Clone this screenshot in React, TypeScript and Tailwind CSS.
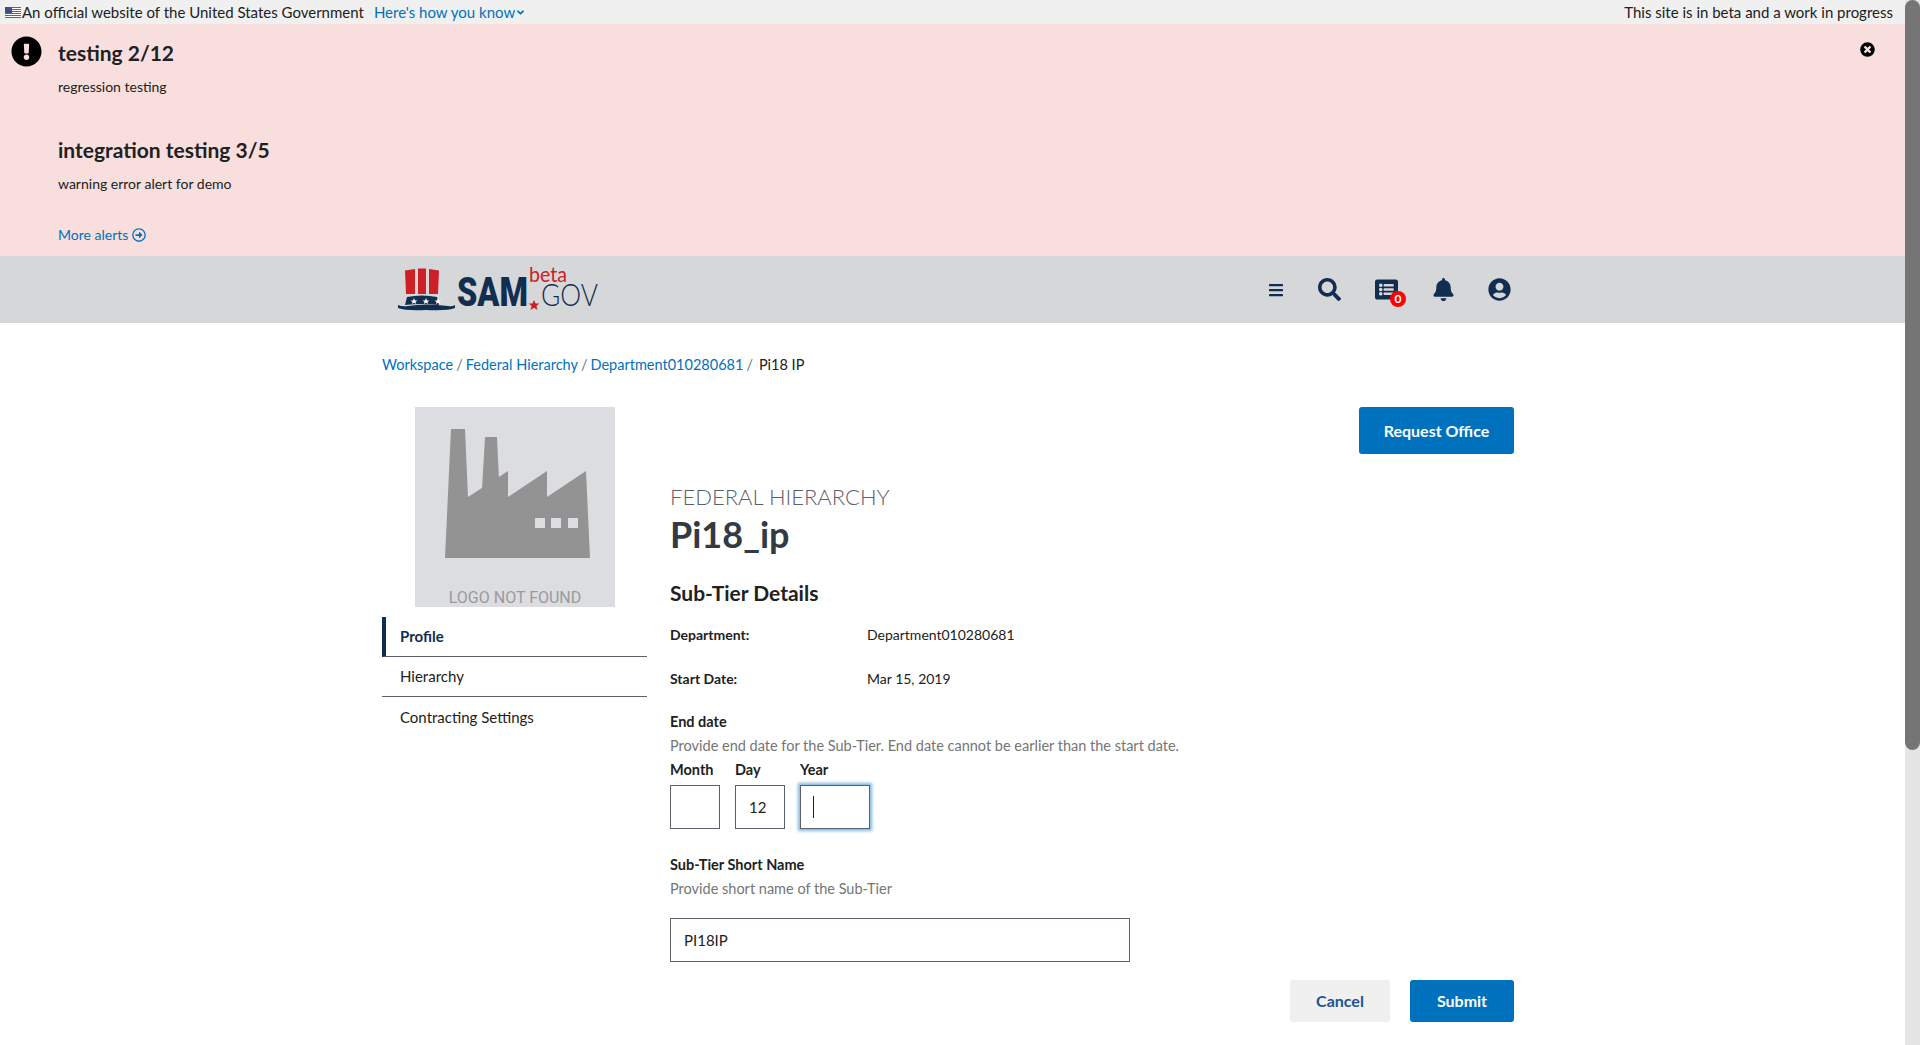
import React from "react";
import { FaBars, FaSearch, FaListAlt, FaBell, FaUserCircle, FaExclamationCircle, FaTimesCircle, FaRegArrowAltCircleRight, FaAngleDown } from "react-icons/fa";

function Flag() {
  return (
    <svg width="16" height="11" viewBox="0 0 16 11" className="shrink-0">
      <rect width="16" height="11" fill="#fff" />
      {[0, 2, 4, 6, 8, 10].map((y) => (
        <rect key={y} y={y} width="16" height="1" fill="#d33" />
      ))}
      <rect width="7" height="6" fill="#3c4f8f" />
    </svg>
  );
}

function SamLogo() {
  return (
    <svg width="204" height="46" viewBox="0 0 204 46" className="block">
      <path d="M7 3.5 L17 2 L17 27 L8 27 Z" fill="#cd2026" />
      <path d="M20 1.5 L28 1.5 L28 27 L20 27 Z" fill="#cd2026" />
      <path d="M31 2 L41 3.5 L40 27 L31 27 Z" fill="#cd2026" />
      <path d="M9 30 Q24 27 39 30 L41 38 Q24 36 7 38 Z" fill="#112e51" />
      <path d="M0 38 Q4 40 10 39 Q28 36 50 39 Q54 40 57 38 L57 41 Q50 44 28 43 Q8 44 0 41 Z" fill="#112e51" />
      <polygon points="16,31 17,33.5 19.4,33.5 17.5,35 18.2,37 16,35.8 13.8,37 14.5,35 12.6,33.5 15,33.5" fill="#fff" />
      <polygon points="28,31 29,33.5 31.4,33.5 29.5,35 30.2,37 28,35.8 25.8,37 26.5,35 24.6,33.5 27,33.5" fill="#fff" />
      <polygon points="40,31 41,33.5 43.4,33.5 41.5,35 42.2,37 40,35.8 37.8,37 38.5,35 36.6,33.5 39,33.5" fill="#fff" />
      <text x="59" y="39" fontFamily="Roboto, sans-serif" fontWeight="900" fontSize="40" fill="#112e51" textLength="71" lengthAdjust="spacingAndGlyphs">SAM</text>
      <text x="131" y="15" fontFamily="Lato, sans-serif" fontWeight="400" fontSize="22" fill="#cd2026" textLength="38" lengthAdjust="spacingAndGlyphs">beta</text>
      <text x="143" y="39" fontFamily="Lato, sans-serif" fontWeight="300" fontSize="32" fill="#112e51" textLength="57" lengthAdjust="spacingAndGlyphs">GOV</text>
      <polygon points="136,33 137.6,36.6 141.4,36.6 138.4,39 139.6,43 136,40.8 132.4,43 133.6,39 130.6,36.6 134.4,36.6" fill="#cd2026" />
    </svg>
  );
}

function Factory() {
  return (
    <svg width="150" height="152" viewBox="0 0 150 152" className="block">
      <path d="M33 0 H47 L50 68 L90 42 V68 L129 42 V68 L168 42 L172 129 H27 Z" transform="translate(-22 0)" fill="#939393" />
      <path d="M53 8 H65 L67 51 L50 60 Z" transform="translate(-8 0)" fill="#939393" />
      <rect x="95" y="89" width="10" height="10" fill="#dcdde0" />
      <rect x="111" y="89" width="10" height="10" fill="#dcdde0" />
      <rect x="128" y="89" width="10" height="10" fill="#dcdde0" />
      <rect x="144" y="89" width="0" height="0" fill="#dcdde0" />
    </svg>
  );
}

export default function App() {
  const blue = "text-[#0071bc]";
  return (
    <div className="flex h-[1045px] w-[1920px] overflow-hidden bg-white font-['Lato','Noto_Sans',sans-serif] text-[#212121]">
      <div className="flex w-[1905px] flex-col overflow-hidden">
        {/* Gov banner */}
        <div className="flex h-[24px] shrink-0 items-center justify-between bg-[#f0f0f0] pl-[5px] pr-[12px] text-[15px] leading-none">
          <div className="flex items-center">
            <Flag />
            <span className="ml-px">An official website of the United States Government</span>
            <span className={`ml-[10px] ${blue}`}>Here's how you know</span>
            <FaAngleDown className={`text-[11px] ${blue}`} />
          </div>
          <span>This site is in beta and a work in progress</span>
        </div>

        {/* Alerts */}
        <div className="relative h-[232px] shrink-0 bg-[#f9dede] pl-[58px] pt-[15px]">
          <FaExclamationCircle className="absolute left-[11px] top-[12px] text-[31px] text-black" />
          <FaTimesCircle className="absolute left-[1860px] top-[18px] text-[15px] text-black" />
          <h3 className="text-[21px] font-bold leading-[28px]">testing 2/12</h3>
          <p className="mt-[10px] text-[14px] leading-[20px]">regression testing</p>
          <h3 className="mt-[39px] text-[21px] font-bold leading-[28px]">integration testing 3/5</h3>
          <p className="mt-[10px] text-[14px] leading-[20px]">warning error alert for demo</p>
          <div className={`mt-[31px] flex items-center gap-[4px] text-[14px] leading-[20px] ${blue}`}>
            More alerts <FaRegArrowAltCircleRight className="text-[14px]" />
          </div>
        </div>

        {/* Header */}
        <header className="flex h-[67px] shrink-0 items-center bg-[#d6d7d9] pl-[398px] text-[#112e51]">
          <div className="mt-[1px]"><SamLogo /></div>
          <div className="ml-[666px] flex items-center">
            <FaBars className="text-[16px]" />
            <FaSearch className="ml-[34px] text-[23px]" />
            <div className="relative ml-[34px]">
              <FaListAlt className="text-[23px]" />
              <span className="absolute left-[15px] top-[13px] flex h-[16px] w-[16px] items-center justify-center rounded-full bg-[#ff0000] text-[12px] font-bold leading-none text-white">0</span>
            </div>
            <FaBell className="ml-[34px] text-[23px]" />
            <FaUserCircle className="ml-[33px] text-[23px]" />
          </div>
        </header>

        {/* Content */}
        <div className="ml-[382px] w-[1132px] flex-1">
          <nav className="mt-[32px] flex h-[20px] items-center text-[14.5px] leading-[20px]">
            <span className={blue}>Workspace</span>
            <span className="mx-[3px] text-[#767676]">/</span>
            <span className={blue}>Federal Hierarchy</span>
            <span className="mx-[3px] text-[#767676]">/</span>
            <span className={blue}>Department010280681</span>
            <span className="mx-[3px] text-[#767676]">/</span>
            <span className="ml-[3px]">Pi18 IP</span>
          </nav>

          <div className="mt-[32px] flex">
            <aside className="w-[265px] shrink-0">
              <div className="mx-auto ml-[33px] flex h-[200px] w-[200px] flex-col items-center bg-[#dcdde0] pt-[22px]">
                <Factory />
                <span className="mt-[8px] font-['Roboto',sans-serif] text-[16px] leading-[18px] text-[#9a9a9a]">LOGO NOT FOUND</span>
              </div>
              <ul className="mt-[10px] text-[15px]">
                <li className="flex h-[40px] items-center border-b border-l-4 border-b-[#5b616b] border-l-[#112e51] pl-[14px] font-bold text-[#112e51]">Profile</li>
                <li className="flex h-[40px] items-center border-b border-[#5b616b] pl-[18px]">Hierarchy</li>
                <li className="flex h-[40px] items-center pl-[18px]">Contracting Settings</li>
              </ul>
            </aside>

            <main className="ml-[23px] flex-1">
              <div className="flex justify-end">
                <button className="h-[47px] w-[155px] rounded-[3px] bg-[#0071bc] text-[16px] font-bold text-white">Request Office</button>
              </div>
              <div className="mt-[30px] text-[22px] font-light leading-[26px] text-[#5b616b]">FEDERAL HIERARCHY</div>
              <h1 className="mt-[1px] text-[36px] font-bold leading-[46px] text-[#323a45]">Pi18_ip</h1>
              <h2 className="mt-[22px] text-[21px] font-bold leading-[28px]">Sub-Tier Details</h2>

              <div className="mt-[17px] flex h-[20px] items-center text-[14px]">
                <span className="w-[197px] font-bold">Department:</span>
                <span>Department010280681</span>
              </div>
              <div className="mt-[24px] flex h-[20px] items-center text-[14px]">
                <span className="w-[197px] font-bold">Start Date:</span>
                <span>Mar 15, 2019</span>
              </div>

              <div className="mt-[24px] text-[14.5px] font-bold leading-[20px]">End date</div>
              <div className="mt-[4px] text-[14.5px] leading-[20px] text-[#757575]">Provide end date for the Sub-Tier. End date cannot be earlier than the start date.</div>
              <div className="mt-[4px] flex gap-[15px]">
                <div>
                  <div className="text-[14.5px] font-bold leading-[20px]">Month</div>
                  <div className="mt-[5px] h-[44px] w-[50px] border border-[#5b616b]" />
                </div>
                <div>
                  <div className="text-[14.5px] font-bold leading-[20px]">Day</div>
                  <div className="mt-[5px] flex h-[44px] w-[50px] items-center border border-[#5b616b] pl-[13px] text-[15px]">12</div>
                </div>
                <div>
                  <div className="text-[14.5px] font-bold leading-[20px]">Year</div>
                  <div className="mt-[5px] flex h-[44px] w-[70px] items-center border border-[#5b616b] pl-[12px] shadow-[0_0_3px_2px_#7fb8e0]">
                    <span className="h-[22px] w-px bg-[#212121]" />
                  </div>
                </div>
              </div>

              <div className="mt-[26px] text-[14.5px] font-bold leading-[20px]">Sub-Tier Short Name</div>
              <div className="mt-[4px] text-[14.5px] leading-[20px] text-[#757575]">Provide short name of the Sub-Tier</div>
              <div className="mt-[19px] flex h-[44px] w-[460px] items-center border border-[#5b616b] pl-[13px] text-[15px]">PI18IP</div>

              <div className="mt-[18px] flex justify-end gap-[20px]">
                <button className="h-[42px] w-[100px] rounded-[3px] bg-[#f0f0f0] text-[16px] font-bold text-[#205493]">Cancel</button>
                <button className="h-[42px] w-[104px] rounded-[3px] bg-[#0071bc] text-[16px] font-bold text-white">Submit</button>
              </div>
            </main>
          </div>
        </div>
      </div>

      {/* Page scrollbar */}
      <div className="h-full w-[15px] shrink-0 bg-[#e5e5e5]">
        <div className="h-[750px] rounded-full bg-[#757575]" />
      </div>
    </div>
  );
}
